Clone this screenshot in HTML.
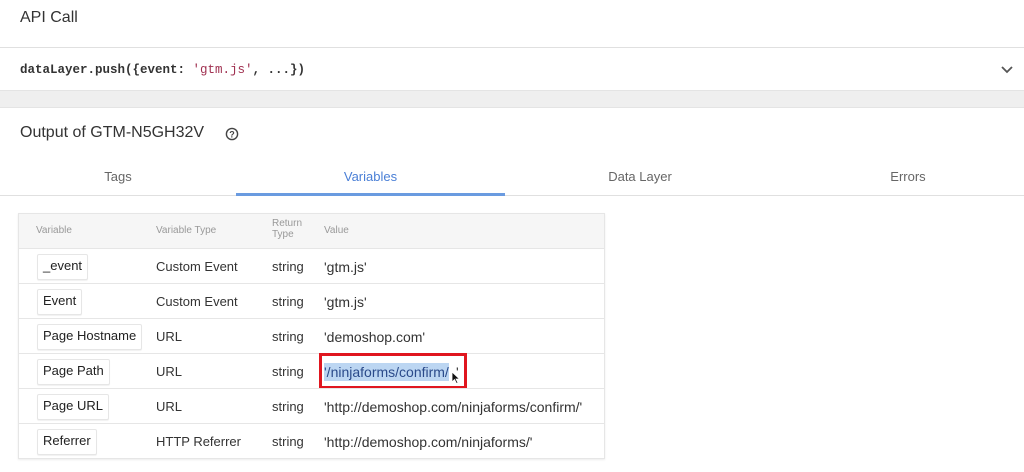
<!DOCTYPE html>
<html><head><style>
body{margin:0;width:1024px;height:472px;background:#fff;font-family:"Liberation Sans",sans-serif;color:#222;position:relative;overflow:hidden}
.a{position:absolute}
.chip{position:absolute;left:18px;border:1px solid #e6e6e6;border-radius:2px;padding:0 5px;height:24px;line-height:22px;font-size:13px;box-shadow:0 1px 1px rgba(0,0,0,.06);background:#fff}
.c{position:absolute;font-size:13px;color:#333}
.v{font-size:14px}
.row{position:absolute;left:0;width:585px;height:35px;border-top:1px solid #e6e6e6}
</style></head><body>
<div class="a" style="left:20px;top:9px;font-size:16px;color:#333">API Call</div>
<div class="a" style="left:0;top:47px;width:1024px;height:1px;background:#e0e0e0"></div>
<div class="a" style="left:20px;top:63px;font-family:'Liberation Mono',monospace;font-size:12.5px;font-weight:bold;color:#333">dataLayer.push({event: <span style="color:#a03050;font-weight:normal">'gtm.js'</span>, ...})</div>
<svg class="a" style="left:1000px;top:65px" width="14" height="10"><path d="M2 2 L7 7 L12 2" stroke="#555" stroke-width="1.8" fill="none"/></svg>
<div class="a" style="left:0;top:90px;width:1024px;height:16px;background:#efefef;border-top:1px solid #e4e4e4;border-bottom:1px solid #e4e4e4"></div>
<div class="a" style="left:20px;top:124px;font-size:16px;color:#333">Output of GTM-N5GH32V</div>
<svg class="a" style="left:225px;top:127px" width="14" height="14"><circle cx="7" cy="7" r="5.6" stroke="#444" stroke-width="1.4" fill="none"/><text x="7" y="10.5" font-size="9" text-anchor="middle" font-family="Liberation Sans" font-weight="bold" fill="#444">?</text></svg>
<div class="a" style="left:0;top:169px;width:236px;text-align:center;font-size:13px;color:#666">Tags</div>
<div class="a" style="left:236px;top:169px;width:269px;text-align:center;font-size:13px;color:#4a7fd6">Variables</div>
<div class="a" style="left:505px;top:169px;width:270px;text-align:center;font-size:13px;color:#666">Data Layer</div>
<div class="a" style="left:790px;top:169px;width:236px;text-align:center;font-size:13px;color:#666">Errors</div>
<div class="a" style="left:0;top:195px;width:1024px;height:1px;background:#e0e0e0"></div>
<div class="a" style="left:236px;top:193px;width:269px;height:3px;background:#6a9be0"></div>
<div class="a" style="left:18px;top:213px;width:585px;height:244px;border:1px solid #e6e6e6;box-shadow:0 1px 2px rgba(0,0,0,.08);background:#fff">
<div class="a" style="left:0;top:0;width:585px;height:34px;background:#f6f6f6"></div>
<div class="c" style="left:17px;top:11px;font-size:10px;color:#999">Variable</div>
<div class="c" style="left:137px;top:11px;font-size:10px;color:#999">Variable Type</div>
<div class="c" style="left:253px;top:4px;font-size:10px;color:#999;line-height:11px">Return<br>Type</div>
<div class="c" style="left:305px;top:11px;font-size:10px;color:#999">Value</div>
<div class="row" style="top:34px"><div class="chip" style="top:5px">_event</div><div class="c" style="left:137px;top:10px">Custom Event</div><div class="c" style="left:253px;top:10px">string</div><div class="c v" style="left:305px;top:10px">'gtm.js'</div></div>
<div class="row" style="top:69px"><div class="chip" style="top:5px">Event</div><div class="c" style="left:137px;top:10px">Custom Event</div><div class="c" style="left:253px;top:10px">string</div><div class="c v" style="left:305px;top:10px">'gtm.js'</div></div>
<div class="row" style="top:104px"><div class="chip" style="top:5px">Page Hostname</div><div class="c" style="left:137px;top:10px">URL</div><div class="c" style="left:253px;top:10px">string</div><div class="c v" style="left:305px;top:10px">'demoshop.com'</div></div>
<div class="row" style="top:139px"><div class="chip" style="top:5px">Page Path</div><div class="c" style="left:137px;top:10px">URL</div><div class="c" style="left:253px;top:10px">string</div>
<div class="c v" style="left:305px;top:9px;background:#bcd6f2;color:#2a4a8a;padding:1px 0">'/ninjaforms/confirm/</div><div class="c v" style="left:437px;top:10px">'</div>
<div class="a" style="left:300px;top:-1px;width:148px;height:36px;border:3px solid #e0161f;box-sizing:border-box"></div>
<svg class="a" style="left:432px;top:17px" width="10" height="14"><path d="M1 1 L1 11 L3.5 8.5 L5.5 12.5 L7 11.8 L5 8 L8.5 8 Z" fill="#111" stroke="#fff" stroke-width=".8"/></svg></div>
<div class="row" style="top:174px"><div class="chip" style="top:5px">Page URL</div><div class="c" style="left:137px;top:10px">URL</div><div class="c" style="left:253px;top:10px">string</div><div class="c v" style="left:305px;top:10px">'http://demoshop.com/ninjaforms/confirm/'</div></div>
<div class="row" style="top:209px"><div class="chip" style="top:5px">Referrer</div><div class="c" style="left:137px;top:10px">HTTP Referrer</div><div class="c" style="left:253px;top:10px">string</div><div class="c v" style="left:305px;top:10px">'http://demoshop.com/ninjaforms/'</div></div>
</div>
</body></html>
